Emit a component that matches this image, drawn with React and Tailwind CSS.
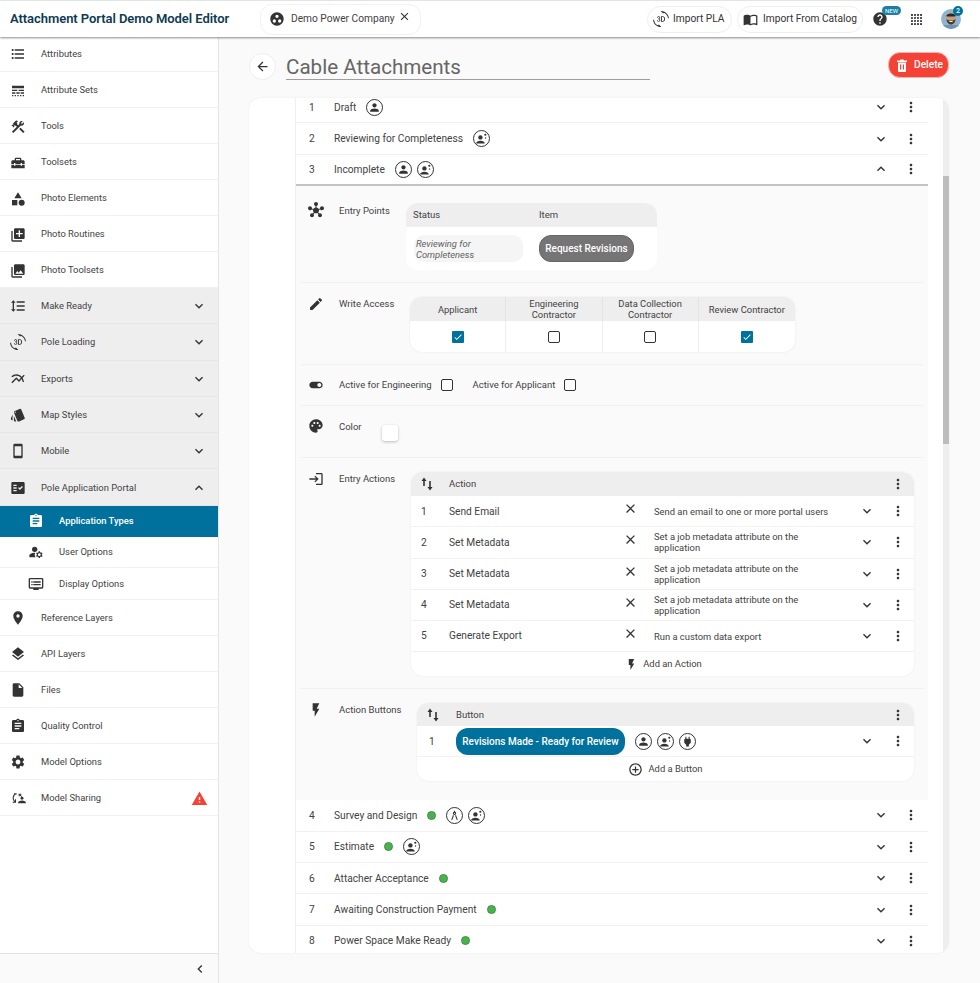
import React from 'react';
import {
  MdFormatListBulleted, MdLineStyle, MdConstruction, MdHomeRepairService, MdCategory, MdLibraryAdd,
  MdPhotoLibrary, MdFormatLineSpacing, Md3dRotation, MdMultilineChart, MdStyle, MdSmartphone,
  MdFactCheck, MdAssignment, MdManageAccounts, MdPlace, MdLayers, MdInsertDriveFile, MdSettings,
  MdWarning, MdExpandMore, MdExpandLess, MdChevronLeft, MdMoreVert, MdClose, MdArrowBack,
  MdHelp, MdImportContacts, MdGroupWork, MdPerson, MdHub, MdEdit, MdToggleOn, MdPalette,
  MdLogin, MdFlashOn, MdAddCircleOutline, MdCheck, MdArchitecture, MdPower, MdOutlineDvr,
} from 'react-icons/md';

const font = { fontFamily: 'Roboto, sans-serif' };

// model sharing: no stock icon, two arrows around a person
const SharingIcon = ({ size = 16 }) => (
  <svg width={size} height={size} viewBox="0 0 24 24" fill="#333">
    <path d="M6 5h4v1.6H8.4C6.6 8 5.6 10 5.6 12c0 1.8.7 3.3 1.9 4.4V14H9v5H4v-1.5h2.2C4.8 16 4 14.1 4 12c0-2.4 1-4.5 2.6-5.9H6z" />
    <path d="M13 5.5l4 0v1.5h-1.5l2.5 2.5-1 1-2.5-2.5V9.5H13z" />
    <circle cx="18" cy="12.5" r="2.2" />
    <path d="M12 20c0-2.8 2.8-4.2 6-4.2s6 1.4 6 4.2z" />
  </svg>
);

const SortIcon = () => (
  <svg width="14" height="16" viewBox="0 0 14 16" fill="#333">
    <path d="M4 1.5L6.5 5H4.800v5H3.200V5H1.500z" />
    <path d="M10 14.500L7.500 11h1.700V5h1.600v6h1.700z" />
  </svg>
);

const ReviewIcon = ({ size = 13 }) => (
  <svg width={size} height={size} viewBox="0 0 24 24" fill="#333">
    <circle cx="10" cy="10" r="4" />
    <path d="M2 21c0-3.400 4-5 8-5s8 1.600 8 5z" />
    <circle cx="19" cy="5" r="2" />
    <circle cx="19.500" cy="11" r="1.300" />
  </svg>
);

const TrashIcon = () => (
  <svg width="12" height="13" viewBox="0 0 12 13" fill="#fff">
    <path d="M1 1.500h3L4.500.500h3L8 1.500h3V3H1z" />
    <path fillRule="evenodd" d="M2 3.500h8V12a1 1 0 0 1-1 1H3a1 1 0 0 1-1-1zM4 5.500v5h1.200v-5zM6.800 5.500v5H8v-5z" />
  </svg>
);

const AppsIcon = () => (
  <svg width="11" height="11" viewBox="0 0 11 11" fill="#333">
    {[1, 4, 7, 10].map((y) => [1, 4, 7, 10].map((x) => <circle key={`${x}-${y}`} cx={x} cy={y} r="1.050" />))}
  </svg>
);

const CircleIcon = ({ children }) => (
  <span className="flex h-[17px] w-[17px] shrink-0 items-center justify-center rounded-full border border-[#333] bg-white">
    {children}
  </span>
);
const Applicant = () => <CircleIcon><MdPerson size={13} color="#333" /></CircleIcon>;
const Reviewer = () => <CircleIcon><ReviewIcon /></CircleIcon>;
const Surveyor = () => <CircleIcon><MdArchitecture size={13} color="#333" /></CircleIcon>;
const Plug = () => <CircleIcon><MdPower size={13} color="#333" /></CircleIcon>;
const Dot = () => <span className="block h-[9px] w-[9px] shrink-0 rounded-full border border-[#3c9440] bg-[#4caf50]" />;

const topItems = [
  ['Attributes', MdFormatListBulleted],
  ['Attribute Sets', MdLineStyle],
  ['Tools', MdConstruction],
  ['Toolsets', MdHomeRepairService],
  ['Photo Elements', MdCategory],
  ['Photo Routines', MdLibraryAdd],
  ['Photo Toolsets', MdPhotoLibrary],
];
const groupItems = [
  ['Make Ready', MdFormatLineSpacing],
  ['Pole Loading', Md3dRotation],
  ['Exports', MdMultilineChart],
  ['Map Styles', MdStyle],
  ['Mobile', MdSmartphone],
];
const subItems = [
  ['User Options', MdManageAccounts],
  ['Display Options', MdOutlineDvr],
];
const bottomItems = [
  ['Reference Layers', MdPlace],
  ['API Layers', MdLayers],
  ['Files', MdInsertDriveFile],
  ['Quality Control', MdAssignment],
  ['Model Options', MdSettings],
];

const NavRow = ({ label, Icon, first }) => (
  <div className={first
    ? 'flex h-[35px] items-center border-b border-[#f2f2f2] pl-[10px] text-[9.4px] text-[#424242]'
    : 'flex h-9 items-center border-b border-[#f2f2f2] pl-[10px] pt-[2px] text-[9.4px] text-[#424242]'}>
    <span className="flex w-[31px] shrink-0"><Icon size={16} color="#333" /></span>
    {label}
  </div>
);

const GroupRow = ({ label, Icon, open }) => (
  <div className="flex h-[36.3px] items-center border-b border-[#e6e6e6] bg-[#eeeeee] pl-[10px] pr-[11px] pt-px text-[9.4px] text-[#424242]">
    <span className="flex w-[31px] shrink-0"><Icon size={16} color="#333" /></span>
    {label}
    <span className="ml-auto">
      {open ? <MdExpandLess size={16} color="#333" /> : <MdExpandMore size={16} color="#333" />}
    </span>
  </div>
);

const Sidebar = () => (
  <aside className="flex w-[219px] shrink-0 flex-col border-r border-[#e4e4e4] bg-white">
    <div className="flex-1">
      {topItems.map(([label, Icon], i) => <NavRow key={label} label={label} Icon={Icon} first={i === 0} />)}
      {groupItems.map(([label, Icon]) => <GroupRow key={label} label={label} Icon={Icon} />)}
      <GroupRow label="Pole Application Portal" Icon={MdFactCheck} open />
      <div className="mt-[0.5px] flex h-[31px] items-center bg-[#00719c] pb-px pl-[28px] text-[9.4px] font-medium text-white">
        <span className="flex w-[31px] shrink-0"><MdAssignment size={16} color="#fff" /></span>
        Application Types
      </div>
      {subItems.map(([label, Icon]) => (
        <div key={label} className="flex h-[31.2px] items-center border-b border-[#f2f2f2] pl-[28px] text-[9.4px] text-[#424242]">
          <span className="flex w-[31px] shrink-0"><Icon size={16} color="#333" /></span>
          {label}
        </div>
      ))}
      {bottomItems.map(([label, Icon]) => <NavRow key={label} label={label} Icon={Icon} />)}
      <div className="flex h-9 items-center border-b border-[#f2f2f2] pl-[10px] pr-[10px] pt-[2px] text-[9.4px] text-[#424242]">
        <span className="flex w-[31px] shrink-0"><SharingIcon /></span>
        Model Sharing
        <span className="ml-auto"><MdWarning size={17} color="#f44336" /></span>
      </div>
    </div>
    <div className="flex h-[30px] items-center justify-end border-t border-[#e4e4e4] bg-[#fafafa] pr-[10px]">
      <MdChevronLeft size={16} color="#333" />
    </div>
  </aside>
);

const Header = () => (
  <header className="relative z-10 flex h-[37px] shrink-0 items-center border-t border-[#dfe8df] bg-white pl-[10px] pr-[19px] shadow-[0_1px_2px_rgba(0,0,0,0.45)]">
    <div className="w-[250px] shrink-0 text-[13px] font-semibold tracking-[-0.06px] text-[#0d3b52]">Attachment Portal Demo Model Editor</div>
    <div className="flex h-[31px] w-[161px] items-center rounded-xl border border-[#f2f2f2] pl-[8px] text-[10.2px] text-[#424242]">
      <MdGroupWork size={16} color="#333" />
      <span className="ml-[6px] whitespace-nowrap">Demo Power Company</span>
      <MdClose size={13} color="#333" className="ml-[3px] -mt-[5px]" />
    </div>
    <div className="ml-auto flex h-[27px] w-[85px] items-center rounded-full border border-[#eeeeee] pl-[5px] text-[10.2px] text-[#333]">
      <Md3dRotation size={16} color="#333" />
      <span className="ml-[4px] whitespace-nowrap">Import PLA</span>
    </div>
    <div className="ml-[5px] flex h-[27px] w-[126px] items-center rounded-full border border-[#eeeeee] pl-[5px] text-[10.2px] text-[#333]">
      <MdImportContacts size={15} color="#333" />
      <span className="ml-[5px] whitespace-nowrap">Import From Catalog</span>
    </div>
    <div className="relative ml-[8px] flex w-[18px] justify-center">
      <MdHelp size={16} color="#333" />
      <span className="absolute -top-[5px] left-[11px] rounded-full bg-[#1a7fa6] px-[3px] text-[6px] leading-[9px] text-white">NEW</span>
    </div>
    <span className="ml-[22px] flex"><AppsIcon /></span>
    <div className="relative ml-[19px] h-5 w-5">
      <svg width="20" height="20" viewBox="0 0 20 20">
        <defs><clipPath id="av"><circle cx="10" cy="10" r="10" /></clipPath></defs>
        <g clipPath="url(#av)">
          <rect width="20" height="20" fill="#8fb4d0" />
          <rect y="16" width="20" height="4" fill="#6d93b5" />
          <ellipse cx="10" cy="9.500" rx="4.600" ry="6" fill="#c99b7d" />
          <path d="M5.200 7c.5-3.500 9-3.500 9.600 0l-1 .6H6.200z" fill="#2f2620" />
          <path d="M5.500 10c1 1 2 1.500 4.500 1.500s3.500-.5 4.500-1.500c0 3-2 5.500-4.500 5.500s-4.500-2.500-4.500-5.500z" fill="#4a3a30" />
          <rect x="8.300" y="12" width="3.400" height="1" rx=".5" fill="#fff" />
        </g>
      </svg>
      <span className="absolute -right-[2px] -top-[3px] flex h-[10px] w-[10px] items-center justify-center rounded-full bg-[#00719c] text-[7px] font-medium text-white">2</span>
    </div>
  </header>
);

const Row = ({ n, name, icons, dot, open }) => (
  <div className={open
    ? 'flex h-[31.4px] items-center border-b-2 border-[#c4c4c4] bg-white text-[10.2px] text-[#424242]'
    : 'flex h-[31.4px] items-center border-b border-[#f2f2f2] bg-white text-[10.2px] text-[#424242]'}>
    <span className="w-[38px] pl-[13px]">{n}</span>
    <span>{name}</span>
    {dot && <span className="ml-[10px]"><Dot /></span>}
    <span className="ml-[10px] flex gap-[5px]">{icons}</span>
    <span className="ml-auto mr-[14px]">
      {open ? <MdExpandLess size={16} color="#333" /> : <MdExpandMore size={16} color="#333" />}
    </span>
    <span className="mr-[9px] w-4"><MdMoreVert size={16} color="#333" /></span>
  </div>
);

const Checkbox = ({ checked }) => (
  checked ? (
    <span className="flex h-3 w-3 items-center justify-center rounded-[1px] bg-[#00719c]">
      <MdCheck size={10} color="#fff" />
    </span>
  ) : (
    <span className="block h-3 w-3 rounded-[2px] border-[1.5px] border-[#333] bg-white" />
  )
);

const Section = ({ Icon, label, labelClass, className, children }) => (
  <div className={className}>
    <span className="-mt-px flex w-[18px] shrink-0 justify-center"><Icon size={16} color="#333" /></span>
    <span className={labelClass}>{label}</span>
    {children}
  </div>
);

const actions = [
  ['Send Email', 'Send an email to one or more portal users'],
  ['Set Metadata', 'Set a job metadata attribute on the application'],
  ['Set Metadata', 'Set a job metadata attribute on the application'],
  ['Set Metadata', 'Set a job metadata attribute on the application'],
  ['Generate Export', 'Run a custom data export'],
];

const EntryActions = () => (
  <div className="w-[503px] shrink-0 overflow-hidden rounded-xl bg-white shadow-[0_0_2px_rgba(0,0,0,0.08)]">
    <div className="flex h-6 items-center bg-[#eeeeee] text-[9.5px] text-[#424242]">
      <span className="flex w-[38px] pl-[9px]"><SortIcon /></span>
      <span>Action</span>
      <span className="ml-auto mr-[8px] w-4"><MdMoreVert size={16} color="#333" /></span>
    </div>
    {actions.map(([name, desc], i) => (
      <div key={i} className="flex h-[31.2px] items-center border-b border-[#f2f2f2] text-[10.2px] text-[#424242]">
        <span className="w-[38px] pl-[10px]">{i + 1}</span>
        <span className="w-[174px]">{name}</span>
        <span className="-mt-[5px] w-[31px]"><MdClose size={15} color="#333" /></span>
        <span className="w-[185px] text-[9.4px] leading-[11px]">{desc}</span>
        <span className="ml-[20px]"><MdExpandMore size={16} color="#333" /></span>
        <span className="ml-[15px]"><MdMoreVert size={16} color="#333" /></span>
      </div>
    ))}
    <div className="flex h-6 items-center justify-center pl-[2px] text-[9.4px] text-[#424242]">
      <MdFlashOn size={13} color="#333" />
      <span className="ml-[5px]">Add an Action</span>
    </div>
  </div>
);

const ActionButtons = () => (
  <div className="w-[497px] shrink-0 overflow-hidden rounded-xl bg-white shadow-[0_0_2px_rgba(0,0,0,0.08)]">
    <div className="flex h-[23px] items-center bg-[#eeeeee] text-[9.5px] text-[#424242]">
      <span className="flex w-[39px] pl-[9px]"><SortIcon /></span>
      <span>Button</span>
      <span className="ml-auto mr-[8px] w-4"><MdMoreVert size={16} color="#333" /></span>
    </div>
    <div className="flex h-[31px] items-center border-b border-[#f2f2f2] text-[10.2px] text-[#424242]">
      <span className="w-[39px] pl-[12px]">1</span>
      <span className="flex h-[27px] w-[169px] items-center justify-center whitespace-nowrap rounded-[12px] bg-[#00719c] text-[10px] font-medium text-white">Revisions Made - Ready for Review</span>
      <span className="ml-[10px] flex gap-[5px]"><Applicant /><Reviewer /><Plug /></span>
      <span className="ml-auto"><MdExpandMore size={16} color="#333" /></span>
      <span className="ml-[15px] mr-[8px]"><MdMoreVert size={16} color="#333" /></span>
    </div>
    <div className="flex h-6 items-center justify-center text-[9.4px] text-[#424242]">
      <MdAddCircleOutline size={15} color="#333" />
      <span className="ml-[5px]">Add a Button</span>
    </div>
  </div>
);

const Expanded = () => (
  <div className="h-[614px] bg-[#fafafa]">
    <Section Icon={MdHub} label="Entry Points" labelClass="ml-[14px] w-[67px] shrink-0 text-[9.5px] leading-4 text-[#424242]" className="mx-[5px] flex h-[97px] items-start border-b border-[#f0f0f0] pl-[6px] pt-[17px]">
      <div className="w-[251px] shrink-0 overflow-hidden rounded-xl bg-white text-[9.5px] text-[#424242]">
        <div className="flex h-6 items-center bg-[#eeeeee] pl-[7px]">
          <span className="w-[126px]">Status</span>
          <span>Item</span>
        </div>
        <div className="flex h-[43px] items-start pl-2 pt-2">
          <span className="flex h-[27px] w-[109px] items-center rounded-[10px] bg-[#f5f5f5] pl-[2px] text-[9.4px] italic leading-[11px] text-[#616161]">Reviewing for<br />Completeness</span>
          <span className="ml-[16px] flex h-[27px] w-[95px] items-center justify-center whitespace-nowrap rounded-[12px] border border-[#666] bg-[#757575] text-[10px] font-medium text-white">Request Revisions</span>
        </div>
      </div>
    </Section>
    <Section Icon={MdEdit} label="Write Access" labelClass="-mt-px ml-[14px] w-[71px] shrink-0 text-[9.5px] leading-4 text-[#424242]" className="mx-[5px] flex h-[82px] items-start border-b border-[#f0f0f0] pl-[6px] pt-[14px]">
      <div className="w-[385px] shrink-0 overflow-hidden rounded-xl bg-white text-center text-[9.4px] leading-[11px] text-[#424242] shadow-[0_0_2px_rgba(0,0,0,0.1)]">
        <div className="grid h-6 grid-cols-4 bg-[#eeeeee]">
          <span className="flex items-center justify-center border-r border-[#e4e4e4]">Applicant</span>
          <span className="flex items-center justify-center border-r border-[#e4e4e4]">Engineering<br />Contractor</span>
          <span className="flex items-center justify-center border-r border-[#e4e4e4]">Data Collection<br />Contractor</span>
          <span className="flex items-center justify-center">Review Contractor</span>
        </div>
        <div className="grid h-[31px] grid-cols-4">
          <span className="flex items-center justify-center border-r border-[#eeeeee]"><Checkbox checked /></span>
          <span className="flex items-center justify-center border-r border-[#eeeeee]"><Checkbox /></span>
          <span className="flex items-center justify-center border-r border-[#eeeeee]"><Checkbox /></span>
          <span className="flex items-center justify-center"><Checkbox checked /></span>
        </div>
      </div>
    </Section>
    <Section Icon={MdToggleOn} label="Active for Engineering" labelClass="ml-[14px] shrink-0 text-[9.5px] leading-4 text-[#424242]" className="mx-[5px] flex h-[41px] items-center border-b border-[#f0f0f0] pl-[6px]">
      <span className="ml-[9px]"><Checkbox /></span>
      <span className="ml-[20px] text-[9.5px] text-[#424242]">Active for Applicant</span>
      <span className="ml-[9px]"><Checkbox /></span>
    </Section>
    <Section Icon={MdPalette} label="Color" labelClass="ml-[14px] w-[43px] shrink-0 text-[9.5px] leading-4 text-[#424242]" className="mx-[5px] flex h-[52px] items-start border-b border-[#f0f0f0] pl-[6px] pt-[13px]">
      <span className="mt-[6px] h-4 w-4 rounded-[3px] bg-white shadow-[0_1px_3px_rgba(0,0,0,0.25)]" />
    </Section>
    <Section Icon={MdLogin} label="Entry Actions" labelClass="-mt-px ml-[14px] w-[72px] shrink-0 text-[9.5px] leading-4 text-[#424242]" className="mx-[5px] flex h-[231px] items-start border-b border-[#f0f0f0] pl-[6px] pt-[14px]">
      <EntryActions />
    </Section>
    <Section Icon={MdFlashOn} label="Action Buttons" labelClass="-mt-px ml-[14px] w-[78px] shrink-0 text-[9.5px] leading-4 text-[#424242]" className="mx-[5px] flex items-start pl-[6px] pt-[14px]">
      <ActionButtons />
    </Section>
  </div>
);

const Panel = () => (
  <div className="flex h-[855px] overflow-hidden rounded-xl bg-white shadow-[0_0_2px_rgba(0,0,0,0.08)]">
    <div className="w-[47px] shrink-0 border-r border-[#f0f0f0]" />
    <div className="w-[632px] shrink-0 overflow-hidden">
      <div className="-mt-[6px]">
        <Row n="1" name="Draft" icons={<Applicant />} />
        <Row n="2" name="Reviewing for Completeness" icons={<Reviewer />} />
        <Row n="3" name="Incomplete" icons={<><Applicant /><Reviewer /></>} open />
        <Expanded />
        <Row n="4" name="Survey and Design" dot icons={<><Surveyor /><Reviewer /></>} />
        <Row n="5" name="Estimate" dot icons={<Reviewer />} />
        <Row n="6" name="Attacher Acceptance" dot />
        <Row n="7" name="Awaiting Construction Payment" dot />
        <Row n="8" name="Power Space Make Ready" dot />
      </div>
    </div>
    <div className="ml-auto w-[6px] shrink-0 bg-[#eeeeee] pt-[78px]">
      <div className="h-[268px] w-full bg-[#bdbdbd]" />
    </div>
  </div>
);

export default function App() {
  return (
    <div className="flex h-[983px] w-[980px] flex-col overflow-hidden bg-[#fafafa]" style={font}>
      <Header />
      <div className="flex min-h-0 flex-1">
        <Sidebar />
        <main className="w-[730px] pl-[30px]">
          <div className="flex h-[61px] items-start pt-4">
            <span className="flex h-[27px] w-[27px] items-center justify-center rounded-full border border-[#eeeeee] bg-white">
              <MdArrowBack size={15} color="#333" />
            </span>
            <div className="ml-[10px] h-[27px] w-[364px] border-b border-[#9e9e9e] text-[20.6px] leading-[28px] text-[#666]">Cable Attachments</div>
            <div className="ml-auto -mt-px flex h-[26px] w-[61px] items-center rounded-[12px] border border-[#f4b5b0] bg-[#f44336] pl-[7px] text-[10.2px] font-medium text-white">
              <TrashIcon />
              <span className="ml-[6px]">Delete</span>
            </div>
          </div>
          <Panel />
        </main>
      </div>
    </div>
  );
}
